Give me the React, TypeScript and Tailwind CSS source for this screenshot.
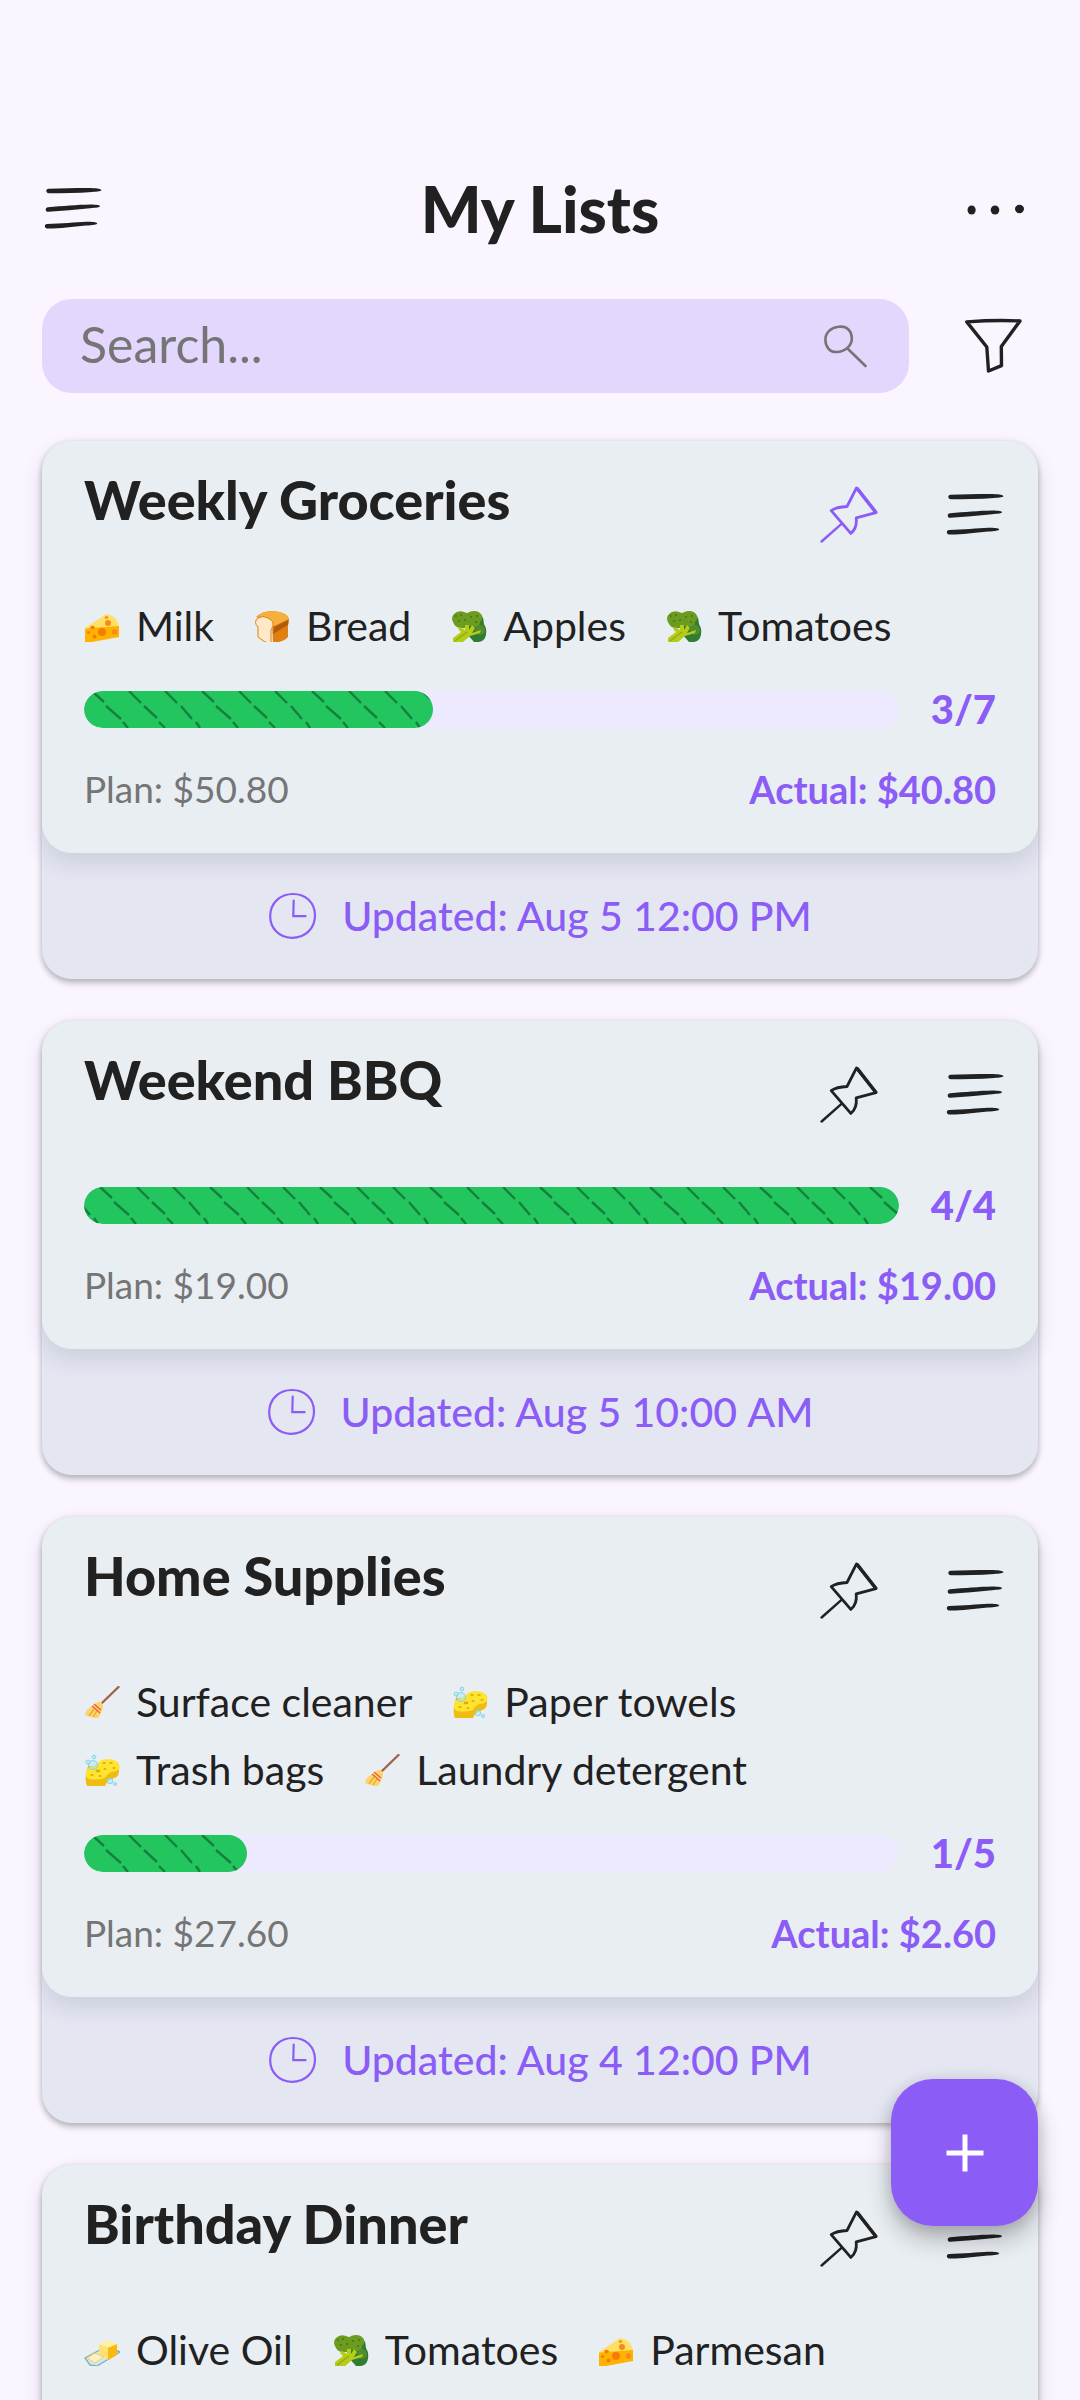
import { useId, useState } from 'react';
import type { ReactNode } from 'react';

type ItemIcon = 'cheese' | 'bread' | 'broccoli' | 'broom' | 'sponge' | 'butter';

interface ShoppingList {
  name: string;
  pinned?: boolean;
  items: { icon: ItemIcon; label: string }[];
  done?: number;
  total?: number;
  plan?: string;
  actual?: string;
  updated?: string;
}

const lists: ShoppingList[] = [
  {
    name: 'Weekly Groceries',
    pinned: true,
    items: [
      { icon: 'cheese', label: 'Milk' },
      { icon: 'bread', label: 'Bread' },
      { icon: 'broccoli', label: 'Apples' },
      { icon: 'broccoli', label: 'Tomatoes' },
    ],
    done: 3,
    total: 7,
    plan: '$50.80',
    actual: '$40.80',
    updated: 'Aug 5 12:00\u202fPM',
  },
  {
    name: 'Weekend BBQ',
    items: [],
    done: 4,
    total: 4,
    plan: '$19.00',
    actual: '$19.00',
    updated: 'Aug 5 10:00\u202fAM',
  },
  {
    name: 'Home Supplies',
    items: [
      { icon: 'broom', label: 'Surface cleaner' },
      { icon: 'sponge', label: 'Paper towels' },
      { icon: 'sponge', label: 'Trash bags' },
      { icon: 'broom', label: 'Laundry detergent' },
    ],
    done: 1,
    total: 5,
    plan: '$27.60',
    actual: '$2.60',
    updated: 'Aug 4 12:00\u202fPM',
  },
  {
    name: 'Birthday Dinner',
    items: [
      { icon: 'butter', label: 'Olive Oil' },
      { icon: 'broccoli', label: 'Tomatoes' },
      { icon: 'cheese', label: 'Parmesan' },
    ],
  },
];

function MenuIcon() {
  return (
    <svg width="58" height="44" viewBox="0 0 58 44" fill="currentColor" aria-hidden="true">
      <path d="M4.5 1.8C20 1.6 38 .8 50 1.2C55 1.4 57.5 2.4 57.5 3.2C57.5 4 54 4.6 48 4.9C34 5.9 18 6.3 5 6.3C1.5 6.3 1.5 1.8 4.5 1.8Z" />
      <path d="M4 20.2C18 19.2 34 17.8 46 17.6C53 17.6 56 18.4 56 19.3C56 20.3 52 20.8 46 21.2C32 22.4 18 24 4.5 24.8C1 25 .8 20.4 4 20.2Z" />
      <path d="M3 37C17 36.8 32 35.2 42 34.8C49 34.5 53.2 35.4 53.2 36.4C53.2 37.4 49 38 42 38.6C28 39.9 14 41.8 4 41.6C0 41.6 0 37.2 3 37Z" />
    </svg>
  );
}

function PinIcon() {
  return (
    <svg width="58" height="58" viewBox="0 0 58 58" fill="none" stroke="currentColor" strokeLinecap="round" strokeLinejoin="round" aria-hidden="true">
      <path d="M1.6 55.5L21.5 37.8" strokeWidth="2.4" />
      <path d="M11.2 24.6C15.6 21.6 20.5 20.8 27 20.5L36.5 1.9L56 26.6L36.2 31.8C37 38.5 35.6 43.5 30.8 47.4Z" strokeWidth="2.8" />
      <path d="M37.5 2.9L55.6 26" strokeWidth="3.5" />
    </svg>
  );
}

function DotsIcon() {
  return (
    <svg width="58" height="58" viewBox="0 0 58 58" fill="currentColor" aria-hidden="true">
      <ellipse cx="5.6" cy="30" rx="4.1" ry="4.5" />
      <ellipse cx="29" cy="30" rx="4.3" ry="4.5" />
      <ellipse cx="53.5" cy="29" rx="4.5" ry="4.2" />
    </svg>
  );
}

function FilterIcon() {
  return (
    <svg width="58" height="58" viewBox="0 0 58 58" fill="none" stroke="currentColor" strokeWidth="3.4" strokeLinecap="round" strokeLinejoin="round" aria-hidden="true">
      <path d="M2.8 4.9C20 3.6 38 3 56 4L37.3 29.6L37.5 48.6L24.5 54L22.8 30Z" />
    </svg>
  );
}

function SearchIcon() {
  return (
    <svg width="44" height="44" viewBox="0 0 44 44" fill="none" stroke="currentColor" strokeWidth="2.6" strokeLinecap="round" aria-hidden="true">
      <path d="M15.5 2.8C24 1.6 29 7 28.8 15C28.6 22 22 27.5 13.5 28C6.5 28.3 2.5 22.5 2.4 16C2.3 8.6 8 3.6 15.5 2.8Z" />
      <path d="M25.5 25.5L42.5 42" />
    </svg>
  );
}

function ClockIcon() {
  return (
    <svg width="50" height="48" viewBox="0 0 50 48" fill="none" stroke="currentColor" strokeWidth="2.2" strokeLinecap="round" aria-hidden="true">
      <path d="M25 2C38 2 47 11 47 23.5C47 36.5 37 46 23.5 45.8C11 45.6 2 36 2.2 24C2.4 11 12 2 25 2Z" />
      <path d="M25.7 8.5L25.3 24.2L37.6 24.2" />
    </svg>
  );
}

// The drawings are cut flat along the bottom edge of their box.
const itemIcons: Record<ItemIcon, ReactNode> = {
  cheese: (
    <>
      <path d="M1 18L22 4Q33 5 35 17L18 23Z" fill="#ffe066" />
      <path d="M1 18.5L35 16V27L8 32H1Z" fill="#ffb300" />
      <circle cx="18" cy="22" r="4" fill="#f57c00" />
      <circle cx="24" cy="13" r="3" fill="#f58a1f" />
      <ellipse cx="8.5" cy="17.5" rx="2.3" ry="1.7" fill="#f57c00" />
      <circle cx="30.5" cy="22" r="2.7" fill="#f58a1f" />
      <circle cx="10.5" cy="26.5" r="2" fill="#f57c00" />
      <circle cx="4.5" cy="22.5" r="1.6" fill="#f57c00" />
      <ellipse cx="22.5" cy="7.5" rx="1.8" ry="1.2" fill="#f58a1f" />
    </>
  ),
  bread: (
    <>
      <path d="M2 7Q8 1 19 1Q33 2 35 9Q35 14 34 15V27Q30 32 19 33L18 12Z" fill="#df8011" />
      <path d="M2 7Q8 1 19 1Q33 2 35 9L20 16Q12 5 2 7Z" fill="#f5af3d" />
      <path d="M20 17L34 10V15L19 24Z" fill="#b35b0c" />
      <path d="M4 8Q9 5 14 8Q20 11 19 16L17 20V33L11 32L4 27V17Q-1 12 4 8Z" fill="#ffe8c8" stroke="#df8011" />
    </>
  ),
  broccoli: (
    <>
      <path d="M17 4Q33 0 33 14Q37 20 34 28Q31 33 23 32L16 24Z" fill="#2e7d32" />
      <path d="M3 14Q-1 8 3 4Q7 0 13 2Q17 4 18 2Q26 -1 30 4Q33 8 29 12Q29 17 24 17Q18 14 14 18Q5 19 3 14Z" fill="#6b9b1f" />
      <circle cx="29" cy="20" r="5" fill="#558b2f" />
      <path d="M2 32V28L10 22L7 19L9 17L14 20V15H18V20L21 15L24 18L21 23L30 20L29 23L19 26L11 33H2Z" fill="#b5cc18" />
      <path d="M4 31L16 22" stroke="#8fae12" strokeWidth="1.5" />
      <g fill="#43761d">
        <circle cx="5" cy="6" r="1" /><circle cx="10" cy="5" r="1" /><circle cx="8" cy="11" r="1" />
        <circle cx="14" cy="10" r="1" /><circle cx="20" cy="7" r="1" /><circle cx="26" cy="6" r="1" /><circle cx="25" cy="12" r="1" />
      </g>
    </>
  ),
  broom: (
    <>
      <path d="M34.5 1L18 17" stroke="#a5604c" strokeWidth="2.4" strokeLinecap="round" />
      <path d="M14 16Q18 15 19 20Q18 28 13 33L1 29Q2 23 8 20Z" fill="#ffd36b" />
      <path d="M10 18L17 24M8 20L16 27" stroke="#e5604d" strokeWidth="1.3" />
      <path d="M5 30L10 23M9 31L13 25" stroke="#e9a92e" strokeWidth="1.3" />
    </>
  ),
  sponge: (
    <>
      <path d="M2 20Q1 28 3 32H21Q23 26 28 25Q35 23 35 18V12H4Z" fill="#eebd12" />
      <path d="M2 19Q2 14 8 13Q12 11 16 7Q24 3 32 7Q37 10 35 15Q32 18 27 18Q23 20 21 24Q12 27 5 25Q1 23 2 19Z" fill="#ffe32e" />
      <g fill="#dcb00c">
        <ellipse cx="20" cy="9" rx="1.8" ry="1" /><ellipse cx="27" cy="9" rx="1.8" ry="1" /><ellipse cx="30" cy="14" rx="1.5" ry="1" />
        <ellipse cx="14" cy="17" rx="2.5" ry="1.4" /><ellipse cx="21" cy="15" rx="1.5" ry="1" /><ellipse cx="8" cy="21" rx="1.8" ry="1" /><ellipse cx="16" cy="22" rx="1.5" ry="1" />
      </g>
      <g fill="#aee6f2" fillOpacity="0.5" stroke="#84d4e8">
        <circle cx="9" cy="11" r="4.5" /><circle cx="10" cy="3" r="1.8" /><circle cx="4" cy="8" r="2" /><circle cx="26" cy="27" r="2.7" /><circle cx="31" cy="30" r="1.5" />
      </g>
    </>
  ),
  butter: (
    <>
      <path d="M1 24L23 12L36 18L13 32L6 31Z" fill="#d3eaf0" stroke="#7cb2bd" strokeWidth="1.4" />
      <path d="M15 10L24 6L33 10L24 14Z" fill="#fff0a3" />
      <path d="M15 10L24 14V26L15 20Z" fill="#ffe073" />
      <path d="M24 14L33 10V21L24 26Z" fill="#fbb90d" />
      <path d="M3 24L11 19L20 23L11 29Z" fill="#fff0c4" stroke="#f0cd6b" />
    </>
  ),
};

function Hatching({ offset }: { offset: number }) {
  const id = useId();
  return (
    <svg width="100%" height="37" className="block" aria-hidden="true">
      <defs>
        <pattern id={id} x={offset} width="110" height="37" patternUnits="userSpaceOnUse">
          <path
            d="M8 0L20 11M22 15L37 28M39 31L44 37M45 0L57 12M60 15L73 27M75 31L81 37M81 0L93 12M97 15L108 28M2 31L6 37"
            stroke="#15803d" strokeWidth="2.4" fill="none"
          />
        </pattern>
      </defs>
      <rect width="100%" height="37" fill={`url(#${id})`} />
    </svg>
  );
}

function ListCard({ list }: { list: ShoppingList }) {
  const [pinned, setPinned] = useState(Boolean(list.pinned));
  const { done, total } = list;

  return (
    <article className="shrink-0 rounded-[30px] bg-[#e4e7f2] shadow-[0_4px_6px_rgba(0,0,0,0.22),0_1px_6px_rgba(0,0,0,0.10)]">
      <div className="rounded-[30px] bg-[#e9eef3] px-[42px] pb-10 shadow-[0_10px_22px_rgba(40,40,70,0.13)]">
        <div className="-mr-[42px] flex h-[141px] items-start pt-[11px]">
          <h2 className="flex-1 pt-[18px] text-[54px] leading-[60px] font-black">{list.name}</h2>
          <button
            type="button" aria-label="Pin list" aria-pressed={pinned} onClick={() => setPinned(!pinned)}
            className={`flex size-[126px] items-center justify-center ${pinned ? 'text-[#8b5cf6]' : ''}`}
          >
            <PinIcon />
          </button>
          <button type="button" aria-label="List menu" className="flex size-[126px] items-center justify-center">
            <MenuIcon />
          </button>
        </div>
        {list.items.length > 0 && (
          <ul className="flex flex-wrap gap-x-10 gap-y-4 pt-[18px] pb-[14px]">
            {list.items.map((item) => (
              <li key={item.label} className="flex items-center gap-4 text-[41px] leading-[52px]">
                <svg width="36" height="32" viewBox="0 0 36 32" aria-hidden="true">{itemIcons[item.icon]}</svg>
                {item.label}
              </li>
            ))}
          </ul>
        )}
        {done !== undefined && total !== undefined && (
          <>
            <div className="flex items-center gap-8 pt-4">
              <div
                role="progressbar" aria-label={list.name} aria-valuenow={done} aria-valuemax={total}
                className="h-[37px] flex-1 overflow-hidden rounded-full bg-[#ede9fe]"
              >
                <div className="h-full overflow-hidden rounded-full bg-[#22c55e]" style={{ width: `${(done / total) * 100}%` }}>
                  <Hatching offset={done === total ? 8 : 0} />
                </div>
              </div>
              <span className="text-[40px] leading-[54px] font-black text-[#8b5cf6]">{done}/{total}</span>
            </div>
            <div className="flex items-center justify-between pt-[29px] leading-[48px]">
              <span className="text-[37px] text-[#757575]">Plan: {list.plan}</span>
              <span className="text-[38px] font-bold text-[#8b5cf6]">Actual: {list.actual}</span>
            </div>
          </>
        )}
      </div>
      {list.updated && (
        <p className="flex h-[126px] items-center justify-center gap-6 text-[41px] font-medium text-[#8b5cf6]">
          <ClockIcon />
          Updated: {list.updated}
        </p>
      )}
    </article>
  );
}

export default function App() {
  const [query, setQuery] = useState('');

  return (
    <div className="flex h-screen flex-col overflow-hidden bg-[#faf5ff] font-[Lato,'Open_Sans',sans-serif] text-[#212121]">
      <header className="grid grid-cols-[1fr_auto_1fr] items-center px-[10px] pt-[146px]">
        <button type="button" aria-label="Open menu" className="flex size-[126px] items-center justify-center">
          <MenuIcon />
        </button>
        <h1 className="text-[64px] leading-[72px] font-black">My Lists</h1>
        <button type="button" aria-label="More" className="flex h-[126px] w-[150px] items-center justify-center justify-self-end">
          <DotsIcon />
        </button>
      </header>
      <div className="flex items-center pt-[27px] pl-[42px]">
        <label className="flex h-[94px] flex-1 items-center rounded-[30px] bg-[#e4d7fe] pr-[42px] pl-[38px] text-[#757575]">
          <input
            type="text" value={query} onChange={(e) => setQuery(e.target.value)} placeholder="Search..." aria-label="Search"
            className="min-w-0 flex-1 bg-transparent pb-1 text-[50px] outline-none placeholder:text-[#757575]"
          />
          <SearchIcon />
        </label>
        <button type="button" aria-label="Filter" className="flex h-[94px] w-[171px] items-center justify-center pr-1">
          <FilterIcon />
        </button>
      </div>
      <main className="flex flex-col gap-[42px] px-[42px] pt-12">
        {lists.map((list) => (
          <ListCard key={list.name} list={list} />
        ))}
      </main>
      <button
        type="button" aria-label="Add list"
        className="fixed right-[42px] bottom-[174px] flex size-[147px] items-center justify-center rounded-[42px] bg-[#8b5cf6] text-white shadow-[0_14px_24px_rgba(0,0,0,0.24),0_2px_16px_rgba(0,0,0,0.14)]"
      >
        <svg width="38" height="38" viewBox="0 0 38 38" stroke="currentColor" strokeWidth="5" aria-hidden="true">
          <path d="M19 0.5V37.5M0.5 19H37.5" />
        </svg>
      </button>
    </div>
  );
}
